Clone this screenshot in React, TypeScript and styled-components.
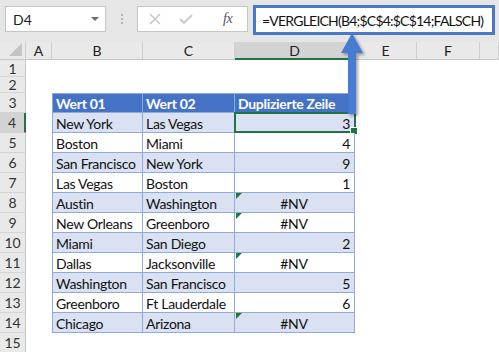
import React from "react";
import styled, { createGlobalStyle, css } from "styled-components";

const Global = createGlobalStyle`
  html, body { margin: 0; padding: 0; background: #fff; overflow: hidden; }
  body { font-family: "Lato", "Noto Sans", sans-serif; }
  * { box-sizing: border-box; }
`;

const Page = styled.div`
  position: relative;
  width: 499px;
  height: 352px;
  overflow: hidden;
  background: #fff;
`;

const Toolbar = styled.div`
  display: flex;
  align-items: flex-start;
  height: 42px;
  background: #e6e6e6;
  padding: 5px 0 0 5px;
`;

const NameBox = styled.div`
  width: 101px;
  height: 26px;
  margin-top: 1px;
  background: #fff;
  border: 1px solid #c6c6c6;
  display: flex;
  align-items: center;
  justify-content: space-between;
  padding: 0 6px 0 7px;
  font-size: 14px;
  color: #222;
`;

const DropArrow = styled.span`
  width: 0;
  height: 0;
  border-left: 4px solid transparent;
  border-right: 4px solid transparent;
  border-top: 4px solid #6d6d6d;
`;

const Dots = styled.div`
  width: 31px;
  height: 26px;
  margin-top: 1px;
  display: flex;
  flex-direction: column;
  align-items: center;
  justify-content: center;
  gap: 2px;
  & > span {
    width: 2px;
    height: 2px;
    background: #b5b5b5;
  }
`;

const FxBox = styled.div`
  width: 111px;
  height: 26px;
  margin-top: 1px;
  background: #fff;
  border: 1px solid #c6c6c6;
  display: flex;
  align-items: center;
  padding: 0 0 0 11px;
  gap: 18px;
`;

const FxLabel = styled.span`
  font-family: "Liberation Serif", serif;
  font-style: italic;
  font-size: 14px;
  color: #555;
  margin-left: 12px;
  letter-spacing: -0.5px;
`;

const FormulaBox = styled.div`
  margin-left: 5px;
  width: 242px;
  height: 30px;
  background: #fff;
  border: 3px solid #4a78c8;
  display: flex;
  align-items: center;
  padding-left: 6px;
  font-size: 14px;
  letter-spacing: -0.78px;
  color: #111;
  white-space: nowrap;
`;

const Sheet = styled.div`
  display: grid;
  grid-template-columns: 26px 26px 91px 92px 120px 62px 63px 1fr;
  grid-template-rows: 18px 17px 16px repeat(13, 20px);
`;

const ColHead = styled.div<{ $active?: boolean }>`
  background: ${(p) => (p.$active ? "#d3d3d3" : "#e9e9e9")};
  border-right: 1px solid #cfcfcf;
  border-bottom: ${(p) => (p.$active ? "2px solid #217346" : "1px solid #c6c6c6")};
  display: flex;
  align-items: center;
  justify-content: center;
  font-size: 14px;
  color: #222;
`;

const Corner = styled.div`
  position: relative;
  background: #e9e9e9;
  border-right: 1px solid #cfcfcf;
  border-bottom: 1px solid #c6c6c6;
  &::after {
    content: "";
    position: absolute;
    right: 3px;
    bottom: 3px;
    width: 0;
    height: 0;
    border-left: 13px solid transparent;
    border-bottom: 13px solid #c3c3c3;
  }
`;

const RowHead = styled.div<{ $active?: boolean }>`
  background: ${(p) => (p.$active ? "#d3d3d3" : "#e9e9e9")};
  border-right: ${(p) => (p.$active ? "2px solid #217346" : "1px solid #c6c6c6")};
  border-bottom: 1px solid #d4d4d4;
  display: flex;
  align-items: center;
  justify-content: center;
  font-size: 14px;
  color: #333;
`;

const Blank = styled.div``;

const TCell = styled.div<{ $band?: boolean; $head?: boolean; $first?: boolean; $align?: "left" | "right" | "center" }>`
  position: relative;
  background: ${(p) => (p.$head ? "#4472c4" : p.$band ? "#d9e1f2" : "#fff")};
  color: ${(p) => (p.$head ? "#fff" : "#111")};
  font-weight: ${(p) => (p.$head ? 700 : 400)};
  border-right: 1px solid #8eaadb;
  border-bottom: 1px solid #8eaadb;
  ${(p) => p.$first && css`border-left: 1px solid #8eaadb;`}
  ${(p) => p.$head && css`border-top: 1px solid #8eaadb;`}
  display: flex;
  align-items: center;
  justify-content: ${(p) => (p.$align === "right" ? "flex-end" : p.$align === "center" ? "center" : "flex-start")};
  padding: 1px 4px 0 3px;
  font-size: 14px;
  letter-spacing: -0.3px;
  white-space: nowrap;
`;

const ErrorFlag = styled.span`
  position: absolute;
  left: 1px;
  top: 0;
  width: 0;
  height: 0;
  border-top: 6px solid #1e7b34;
  border-right: 6px solid transparent;
`;

const Selection = styled.span`
  position: absolute;
  left: -1px;
  top: -1px;
  right: -2px;
  bottom: -1px;
  border: 2px solid #217346;
  &::after {
    content: "";
    position: absolute;
    right: -4px;
    bottom: -4px;
    width: 6px;
    height: 6px;
    background: #217346;
    border: 1px solid #fff;
  }
`;

const ArrowLayer = styled.svg`
  position: absolute;
  left: 336px;
  top: 30px;
  overflow: visible;
`;

type Row = { b: string; c: string; d: string };

const rows: Row[] = [
  { b: "New York", c: "Las Vegas", d: "3" },
  { b: "Boston", c: "Miami", d: "4" },
  { b: "San Francisco", c: "New York", d: "9" },
  { b: "Las Vegas", c: "Boston", d: "1" },
  { b: "Austin", c: "Washington", d: "#NV" },
  { b: "New Orleans", c: "Greenboro", d: "#NV" },
  { b: "Miami", c: "San Diego", d: "2" },
  { b: "Dallas", c: "Jacksonville", d: "#NV" },
  { b: "Washington", c: "San Francisco", d: "5" },
  { b: "Greenboro", c: "Ft Lauderdale", d: "6" },
  { b: "Chicago", c: "Arizona", d: "#NV" },
];

const cols = ["A", "B", "C", "D", "E", "F", ""];

export default function App() {
  return (
    <Page>
      <Global />
      <Toolbar>
        <NameBox>
          D4
          <DropArrow />
        </NameBox>
        <Dots>
          <span />
          <span />
          <span />
        </Dots>
        <FxBox>
          <svg width="12" height="12" viewBox="0 0 12 12">
            <path d="M1 1 L11 11 M11 1 L1 11" stroke="#c8c8c8" strokeWidth="1.6" fill="none" />
          </svg>
          <svg width="14" height="12" viewBox="0 0 14 12">
            <path d="M1 6 L5 10 L13 2" stroke="#c8c8c8" strokeWidth="1.8" fill="none" />
          </svg>
          <FxLabel>fx</FxLabel>
        </FxBox>
        <FormulaBox>=VERGLEICH(B4;$C$4:$C$14;FALSCH)</FormulaBox>
      </Toolbar>
      <Sheet>
        <Corner />
        {cols.map((c, i) => (
          <ColHead key={i} $active={c === "D"}>
            {c}
          </ColHead>
        ))}
        {[1, 2].map((n) => (
          <React.Fragment key={n}>
            <RowHead>{n}</RowHead>
            {cols.map((_, i) => (
              <Blank key={i} />
            ))}
          </React.Fragment>
        ))}
        <RowHead>3</RowHead>
        <Blank />
        <TCell $head $first>Wert 01</TCell>
        <TCell $head>Wert 02</TCell>
        <TCell $head>Duplizierte Zeile</TCell>
        <Blank />
        <Blank />
        <Blank />
        {rows.map((r, i) => {
          const band = i % 2 === 0;
          const err = r.d === "#NV";
          return (
            <React.Fragment key={i}>
              <RowHead $active={i === 0}>{i + 4}</RowHead>
              <Blank />
              <TCell $band={band} $first>{r.b}</TCell>
              <TCell $band={band}>{r.c}</TCell>
              <TCell $band={band} $align={err ? "center" : "right"}>
                {err && <ErrorFlag />}
                {r.d}
                {i === 0 && <Selection />}
              </TCell>
              <Blank />
              <Blank />
              <Blank />
            </React.Fragment>
          );
        })}
        <RowHead>15</RowHead>
      </Sheet>
      <ArrowLayer width="32" height="90" viewBox="0 0 32 90">
        <defs>
          <filter id="sh" x="-50%" y="-20%" width="200%" height="140%">
            <feDropShadow dx="2" dy="2" stdDeviation="1.5" floodColor="#000" floodOpacity="0.35" />
          </filter>
        </defs>
        <path
          d="M16 3 L27 23 L20 23 L20 84 L12 84 L12 23 L5 23 Z"
          fill="#4a7bd0"
          filter="url(#sh)"
        />
      </ArrowLayer>
    </Page>
  );
}
